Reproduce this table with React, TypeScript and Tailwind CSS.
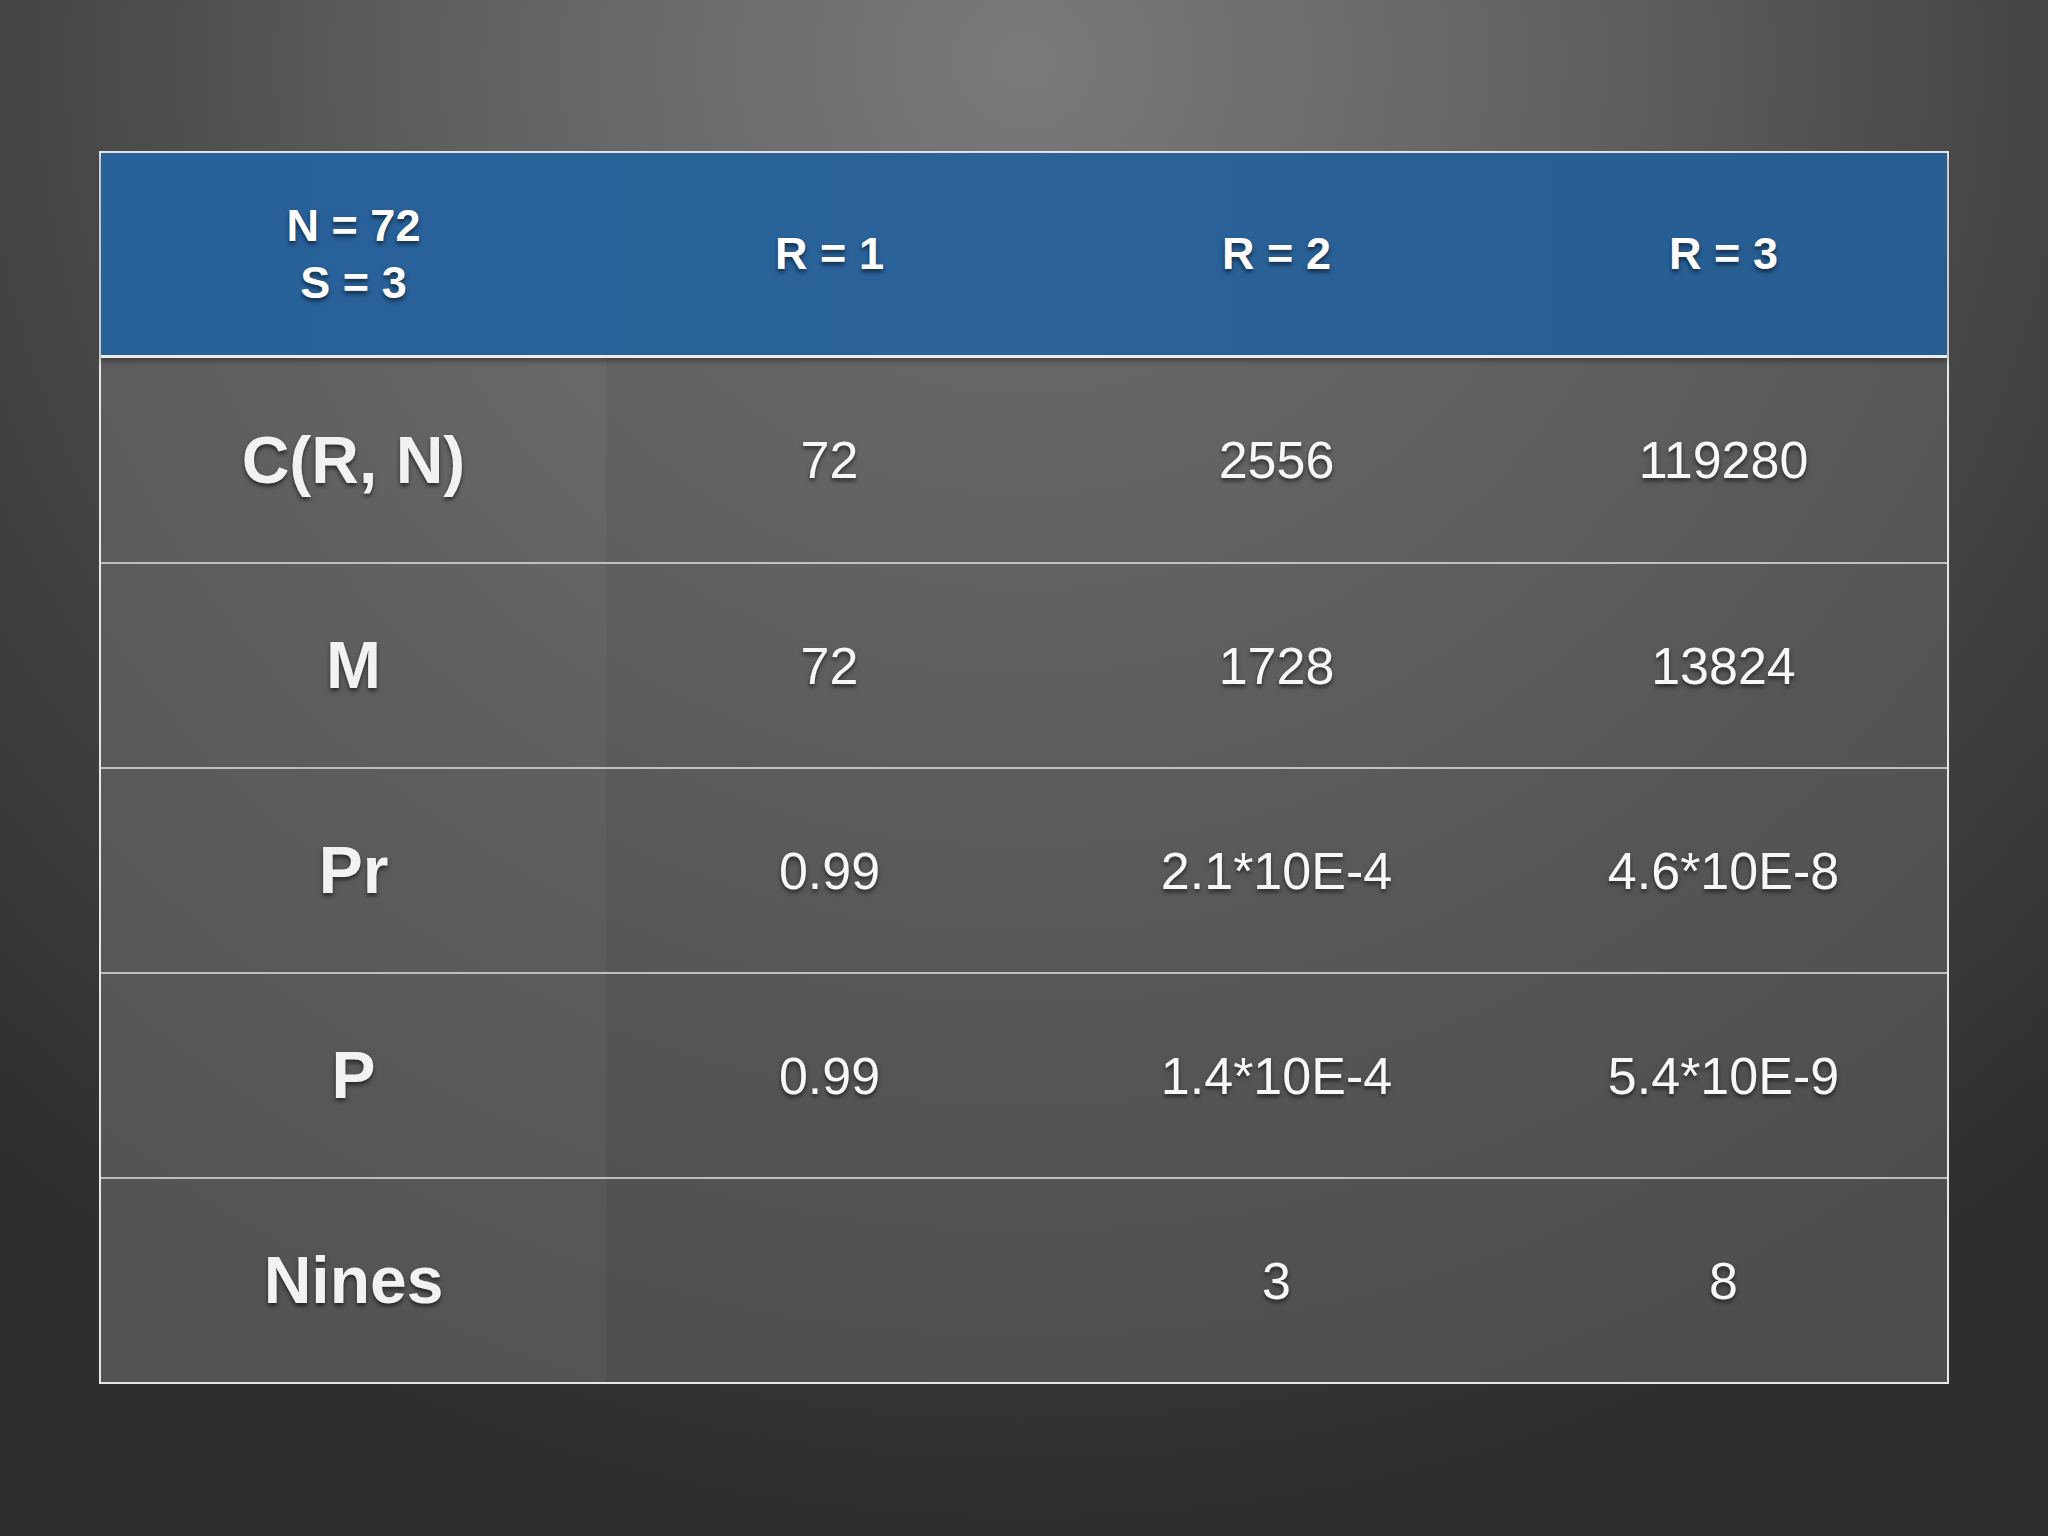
import React from 'react';

type Row = {
    label: string;
    values: string[];
};

const rows: Row[] = [
    { label: 'C(R, N)', values: ['72', '2556', '119280'] },
    { label: 'M', values: ['72', '1728', '13824'] },
    { label: 'Pr', values: ['0.99', '2.1*10E-4', '4.6*10E-8'] },
    { label: 'P', values: ['0.99', '1.4*10E-4', '5.4*10E-9'] },
    { label: 'Nines', values: ['', '3', '8'] },
];

const headers = ['R = 1', 'R = 2', 'R = 3'];

const shadow = '[text-shadow:0_3px_4px_rgba(0,0,0,0.55)]';

export default function App() {
    return (
        <div
            className="w-[2048px] h-[1536px] overflow-hidden pt-[151px] pl-[99px] bg-[radial-gradient(ellipse_75%_95%_at_50%_4%,#7a7a7a_0%,#626262_35%,#454545_65%,#2e2e2e_100%)]"
            style={{ fontFamily: '"Liberation Sans", Arial, sans-serif' }}
        >
            <div className="w-[1850px] border-2 border-[#e6e6e6] flex flex-col">
                {/* header */}
                <div className="h-[205px] grid grid-cols-[505px_1fr_1fr_1fr] bg-[linear-gradient(90deg,#28609a,#2a6299_50%,#265d92)] border-b-[3px] border-[#ececec] shadow-[0_3px_5px_rgba(0,0,0,0.35)] relative z-10">
                    <div className={`flex flex-col items-center justify-center text-white font-bold text-[45px] leading-[57px] ${shadow}`}>
                        <span>N = 72</span>
                        <span>S = 3</span>
                    </div>
                    {headers.map((h) => (
                        <div
                            key={h}
                            className={`flex items-center justify-center text-white font-bold text-[45px] ${shadow}`}
                        >
                            {h}
                        </div>
                    ))}
                </div>

                {/* body */}
                {rows.map((r, i) => (
                    <div
                        key={r.label}
                        className={
                            'grid grid-cols-[505px_1fr_1fr_1fr] bg-[rgba(99,99,99,0.6)] ' +
                            (i === 0 ? 'h-[204px]' : 'h-[205px] border-t-2 border-[rgba(225,225,225,0.75)]')
                        }
                    >
                        <div
                            className={`flex items-center justify-center bg-white/[0.04] text-[#f2f2f2] font-bold text-[66px] ${shadow}`}
                        >
                            {r.label}
                        </div>
                        {r.values.map((v, j) => (
                            <div
                                key={j}
                                className={`flex items-center justify-center text-[#f7f7f7] text-[52px] ${shadow}`}
                            >
                                {v}
                            </div>
                        ))}
                    </div>
                ))}
            </div>
        </div>
    );
}
